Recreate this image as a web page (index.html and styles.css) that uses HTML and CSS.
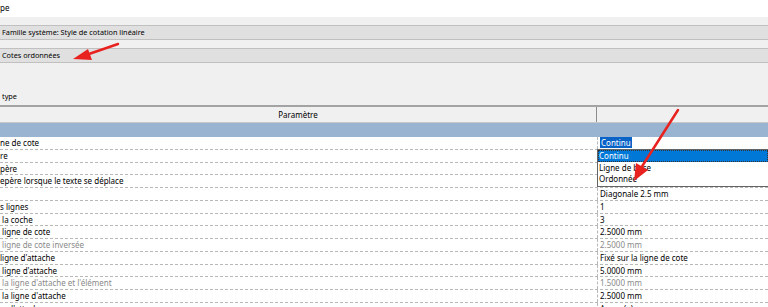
FILE: index.html
```html
<!DOCTYPE html>
<html lang="fr">
<head>
  <meta charset="UTF-8" />
  <title>Propriétés du type</title>
  <link rel="stylesheet" href="styles.css">
</head>
<body>
  <div class="title-row">pe</div>
  <div class="panel">
    <div class="bar">Famille système: Style de cotation linéaire</div>
    <div class="bar">Cotes ordonnées</div>
    <div class="section-label">type</div>
  </div>

  <div class="grid">
    <div class="head-row">
      <span class="head-name">Paramètre</span>
      <span class="head-value"></span>
    </div>
    <div class="group-row"></div>

    <div class="row">
      <span class="name">ne de cote</span>
      <span class="value"><span class="selected-text">Continu</span></span>
    </div>
    <div class="row">
      <span class="name">re</span>
      <span class="value"></span>
    </div>
    <div class="row">
      <span class="name">père</span>
      <span class="value"></span>
    </div>
    <div class="row">
      <span class="name">epère lorsque le texte se déplace</span>
      <span class="value"></span>
    </div>
    <div class="row">
      <span class="name"></span>
      <span class="value">Diagonale 2.5 mm</span>
    </div>
    <div class="row">
      <span class="name">s lignes</span>
      <span class="value">1</span>
    </div>
    <div class="row">
      <span class="name">&nbsp;la coche</span>
      <span class="value">3</span>
    </div>
    <div class="row">
      <span class="name">&nbsp;ligne de cote</span>
      <span class="value">2.5000 mm</span>
    </div>
    <div class="row muted">
      <span class="name">&nbsp;ligne de cote inversée</span>
      <span class="value">2.5000 mm</span>
    </div>
    <div class="row">
      <span class="name">ligne d'attache</span>
      <span class="value">Fixé sur la ligne de cote</span>
    </div>
    <div class="row">
      <span class="name">&nbsp;ligne d'attache</span>
      <span class="value">5.0000 mm</span>
    </div>
    <div class="row muted">
      <span class="name">&nbsp;la ligne d'attache et l'élément</span>
      <span class="value">1.5000 mm</span>
    </div>
    <div class="row">
      <span class="name">&nbsp;la ligne d'attache</span>
      <span class="value">2.5000 mm</span>
    </div>
    <div class="row">
      <span class="name">&nbsp;&nbsp;&nbsp;&nbsp;d'attache</span>
      <span class="value">Aucun(e)</span>
    </div>
  </div>

  <div class="dropdown">
    <div class="option active">Continu</div>
    <div class="option">Ligne de base</div>
    <div class="option">Ordonnée</div>
  </div>

  <svg class="arrows" width="768" height="307" viewBox="0 0 768 307">
    <line x1="118" y1="44" x2="86" y2="55" stroke="#e8231f" stroke-width="2.5" stroke-linecap="round"/>
    <polygon points="73,59 88,49 92,60" fill="#e8231f"/>
    <line x1="678" y1="110" x2="641" y2="168" stroke="#e8231f" stroke-width="2.5" stroke-linecap="round"/>
    <polygon points="634,181 636,163 648,170" fill="#e8231f"/>
  </svg>
</body>
</html>
```

FILE: styles.css
```css
body {
  margin: 0;
  font-family: "Noto Sans", "Open Sans", sans-serif;
  font-size: 8px;
  color: #000;
  background-color: #f0f0f0;
  overflow: hidden;
  position: relative;
  height: 307px;
}
.title-row {
  height: 17px;
  line-height: 16px;
  background-color: #fff;
  padding-left: 0;
}
.panel {
  padding-top: 8px;
  height: 80px;
  font-size: 7.3px;
}
.bar {
  height: 13px;
  line-height: 13px;
  padding-left: 2px;
  background-color: #e0e0e0;
  border-top: 1px solid #c0c0c0;
  border-bottom: 1px solid #c0c0c0;
  margin-bottom: 8px;
}
.section-label {
  padding-left: 2px;
  margin-top: 27px;
  line-height: 12px;
}
.grid {
  border-top: 2px solid #a3a3a3;
}
.head-row {
  display: grid;
  grid-template-columns: 597px 1fr;
  height: 15px;
  line-height: 15px;
  border-bottom: 1px solid #c8c8c8;
  background-color: #f0f0f0;
}
.head-name {
  text-align: center;
  border-right: 1px solid #8c8c8c;
}
.group-row {
  height: 14px;
  background-color: #99b4d1;
}
.row {
  display: grid;
  grid-template-columns: 597px 1fr;
  height: 12.75px;
  box-sizing: border-box;
  line-height: 12px;
  background-color: #fff;
  border-bottom: 1px dashed #b8b8b8;
  white-space: nowrap;
}
.row .name {
  overflow: hidden;
}
.row .value {
  border-left: 1px dashed #b8b8b8;
  padding-left: 2px;
}
.row.muted {
  color: #8a8a8a;
}
.selected-text {
  background-color: #0a64c8;
  color: #fff;
  padding: 0 1px;
}
.dropdown {
  position: absolute;
  left: 597px;
  top: 149px;
  width: 171px;
  height: 38px;
  background-color: #fff;
  border: 1px solid #646464;
  border-right: none;
  box-sizing: border-box;
}
.option {
  height: 11.5px;
  line-height: 11.5px;
  padding-left: 1px;
}
.option.active {
  background-color: #0078d7;
  color: #fff;
  outline: 1px dotted #333;
  outline-offset: -1px;
}
.arrows {
  position: absolute;
  left: 0;
  top: 0;
  pointer-events: none;
}
```
